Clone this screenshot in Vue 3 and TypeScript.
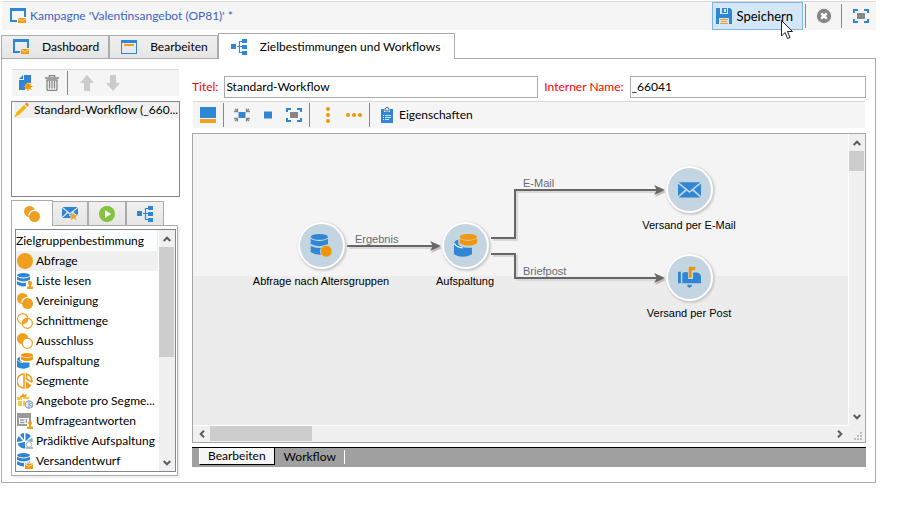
<script setup lang="ts">
import { ref } from 'vue'

interface MainTab { id: string; label: string; icon: string }
interface Activity { label: string; icon: string }
interface FlowNode { id: string; label: string; icon: string; x: number; y: number }
interface FlowLink { id: string; label: string; points: string; x: number; y: number; tipX: number; tipY: number }

const mainTabs: MainTab[] = [
  { id: 'dashboard', label: 'Dashboard', icon: 'campaign' },
  { id: 'edit', label: 'Bearbeiten', icon: 'window' },
  { id: 'targeting', label: 'Zielbestimmungen und Workflows', icon: 'tree' },
]
const activeTab = ref('targeting')

const paletteTabs = [
  { id: 'target', icon: 'union', title: 'Zielgruppenbestimmung' },
  { id: 'delivery', icon: 'mailstar', title: 'Versand' },
  { id: 'run', icon: 'play', title: 'Ausführung' },
  { id: 'flow', icon: 'tree', title: 'Ablauf' },
]
const activePalette = ref('target')

const activities: Activity[] = [
  { label: 'Abfrage', icon: 'query' },
  { label: 'Liste lesen', icon: 'readlist' },
  { label: 'Vereinigung', icon: 'union' },
  { label: 'Schnittmenge', icon: 'intersect' },
  { label: 'Ausschluss', icon: 'exclude' },
  { label: 'Aufspaltung', icon: 'split' },
  { label: 'Segmente', icon: 'segments' },
  { label: 'Angebote pro Segme...', icon: 'offers' },
  { label: 'Umfrageantworten', icon: 'survey' },
  { label: 'Prädiktive Aufspaltung', icon: 'predict' },
  { label: 'Versandentwurf', icon: 'draft' },
]
const selected = ref('Abfrage')

const title = ref('Standard-Workflow')
const internalName = ref('_66041')

const nodes: FlowNode[] = [
  { id: 'query', label: 'Abfrage nach Altersgruppen', icon: 'nodequery', x: 128, y: 112 },
  { id: 'split', label: 'Aufspaltung', icon: 'split', x: 272, y: 112 },
  { id: 'mail', label: 'Versand per E-Mail', icon: 'mail', x: 496, y: 56 },
  { id: 'post', label: 'Versand per Post', icon: 'mailbox', x: 496, y: 144 },
]
const links: FlowLink[] = [
  { id: 'result', label: 'Ergebnis', points: '154,112 240,112', x: 162, y: 109, tipX: 248, tipY: 112 },
  { id: 'email', label: 'E-Mail', points: '298,104 322,104 322,56 464,56', x: 330, y: 53, tipX: 472, tipY: 56 },
  { id: 'letter', label: 'Briefpost', points: '298,120 322,120 322,144 464,144', x: 330, y: 141, tipX: 472, tipY: 144 },
]
</script>

<template>
  <svg class="sprite" aria-hidden="true">
    <symbol id="i-campaign" viewBox="0 0 16 16">
      <path d="M0 0H16V9H14V3H2V12H7V14H0Z" fill="#2f86d4" />
      <rect x="8" y="10" width="8" height="5" fill="#f09a0d" />
      <path d="M8 10.5L12 13L16 10.5" fill="none" stroke="#fbd79c" />
    </symbol>
    <symbol id="i-window" viewBox="0 0 16 16">
      <path d="M0 1H16V15H0ZM1 4V14H15V4Z" fill="#2f86d4" fill-rule="evenodd" />
      <rect x="3" y="5" width="10" height="2" fill="#f0a020" />
    </symbol>
    <symbol id="i-tree" viewBox="0 0 16 16">
      <path d="M0 5H5V10H0ZM11 0H16V4H11ZM11 6H16V10H11ZM11 12H16V16H11Z" fill="#2f86d4" />
      <path d="M6 7.500H11M11 2.500H8.500V13.500H11" fill="none" stroke="#2f86d4" stroke-width="1.200" />
    </symbol>
    <symbol id="i-save" viewBox="0 0 16 16">
      <path d="M0 0H4V6H12V0H14L16 2V16H13V10H3V16H0ZM6 0H11V5H6ZM8 1V4H10V1Z" fill="#2f86d4" fill-rule="evenodd" />
      <path d="M2 6H14V10H2Z" fill="#2f86d4" />
      <path d="M4 11H12V12H4ZM5 13H11V14H5ZM4 15H12V16H4Z" fill="#f0a020" />
    </symbol>
    <symbol id="i-cancel" viewBox="0 0 16 16">
      <circle cx="8" cy="8" r="7.2" fill="#868686" />
      <path d="M5.3 5.3L10.7 10.7M10.7 5.3L5.3 10.7" stroke="#fff" stroke-width="2.4" />
    </symbol>
    <symbol id="i-frame" viewBox="0 0 16 16">
      <path d="M0 5V1H5V3H2V5ZM11 1H16V5H14V3H11ZM0 11H2V13H5V15H0ZM14 11H16V15H11V13H14Z" fill="#2f86d4" />
      <rect x="4" y="5" width="8" height="6" fill="#868686" />
    </symbol>
    <symbol id="i-new" viewBox="0 0 16 16">
      <path d="M6 0H13V8H9V10H7V15H1V5H6Z" fill="#2f86d4" />
      <path d="M1 4L5 0V4Z" fill="#2f86d4" />
      <path d="M10 7V16M5.500 11.500H14.500M6.800 8.300L13.200 14.700M13.200 8.300L6.800 14.700" stroke="#f09a0d" />
      <circle cx="10" cy="11.500" r="3" fill="#f09a0d" />
    </symbol>
    <symbol id="i-trash" viewBox="0 0 16 16">
      <path d="M5.500 2V.5H10.500V2M1 3H15" fill="none" stroke="#868686" stroke-width="1.600" />
      <path d="M3 5V14.500Q3 15.500 4 15.500H12Q13 15.500 13 14.500V5ZM5.500 6V13.500M8 6V13.500M10.500 6V13.500" fill="none" stroke="#868686" stroke-width="1.300" />
    </symbol>
    <symbol id="i-up" viewBox="0 0 16 16"><path d="M8 0L15 8H11V16H5V8H1Z" fill="#cbcbcb" /></symbol>
    <symbol id="i-down" viewBox="0 0 16 16"><path d="M8 16L15 8H11V0H5V8H1Z" fill="#cbcbcb" /></symbol>
    <symbol id="i-pencil" viewBox="0 0 16 16">
      <path d="M2.500 10.500L10 3L12.500 5.500L5 13L1 14.500Z" fill="#f2b705" />
      <path d="M10.800 2.200L12.500 .5Q14 .5 15 3L13.300 4.700Z" fill="#f08a1c" />
      <path d="M.500 15L1.200 13L2.500 14.300Z" fill="#e0a800" />
    </symbol>
    <symbol id="i-layout" viewBox="0 0 16 16">
      <rect y="0" width="16" height="11" fill="#2f86d4" /><rect y="12" width="16" height="4" fill="#f0a020" />
    </symbol>
    <symbol id="i-shrink" viewBox="0 0 16 16">
      <rect x="4.500" y="5" width="7" height="6" fill="#2f86d4" />
      <path d="M1 2L3 4M3.500 1.500V4.500H0M15 2L13 4M12.500 1.500V4.500H16M1 14L3 12M3.500 14.500V11.500H0M15 14L13 12M12.500 14.500V11.500H16" fill="none" stroke="#868686" stroke-width="1.300" />
    </symbol>
    <symbol id="i-square" viewBox="0 0 16 16"><rect x="4" y="4.500" width="8" height="7" fill="#2f86d4" /></symbol>
    <symbol id="i-vdots" viewBox="0 0 16 16">
      <circle cx="8" cy="2" r="2" fill="#f09507" /><circle cx="8" cy="8" r="2" fill="#f09507" /><circle cx="8" cy="14" r="2" fill="#f09507" />
    </symbol>
    <symbol id="i-hdots" viewBox="0 0 16 16">
      <circle cx="2" cy="8" r="2" fill="#f09507" /><circle cx="8" cy="8" r="2" fill="#f09507" /><circle cx="14" cy="8" r="2" fill="#f09507" />
    </symbol>
    <symbol id="i-clipboard" viewBox="0 0 16 16">
      <path d="M2 2H5V5H11V2H14V16H2Z" fill="#2f86d4" />
      <path d="M6 4V2.500A2 2 0 0 1 10 2.500V4Z" fill="#f5f5f5" stroke="#1f64a8" />
      <path d="M4 8.500H5M6 8.500H12M4 10.500H5M6 10.500H12M4 12.500H5M6 12.500H10" stroke="#cfe3f5" />
    </symbol>
    <symbol id="i-query" viewBox="0 0 16 16"><circle cx="8" cy="8" r="8" fill="#f0a020" /></symbol>
    <symbol id="i-union" viewBox="0 0 16 16">
      <circle cx="5.500" cy="5.500" r="5.500" fill="#f0a020" />
      <circle cx="10.500" cy="10.500" r="5.500" fill="#f0a020" />
      <path d="M4.700 9.500A6 6 0 0 1 11 4.400" fill="none" stroke="#fff" stroke-width="1.300" />
    </symbol>
    <symbol id="i-intersect" viewBox="0 0 16 16">
      <path d="M5 10.500A5.500 5.500 0 0 1 11 5A5.500 5.500 0 0 1 5 10.500Z" fill="#f0a020" />
      <circle cx="5.700" cy="5.700" r="5.100" fill="none" stroke="#f0a020" stroke-width="1.200" />
      <circle cx="10.300" cy="10.300" r="5.100" fill="none" stroke="#f0a020" stroke-width="1.200" />
    </symbol>
    <symbol id="i-exclude" viewBox="0 0 16 16">
      <circle cx="5.700" cy="5.700" r="5.700" fill="#f0a020" />
      <circle cx="10.300" cy="10.300" r="5.100" fill="#fff" stroke="#f0a020" stroke-width="1.200" />
    </symbol>
    <symbol id="i-db" viewBox="0 0 16 16">
      <ellipse cx="6.500" cy="2.200" rx="6.500" ry="2.200" fill="#2f86d4" />
      <path d="M0 3.800Q6.500 7.200 13 3.800V6.800Q6.500 10.200 0 6.800ZM0 8.300Q6.500 11.700 13 8.300V11.500Q6.500 15.500 0 11.500Z" fill="#2f86d4" />
    </symbol>
    <symbol id="i-readlist" viewBox="0 0 16 16">
      <use href="#i-db" width="16" height="16" />
      <path d="M9 9H16V16H9Z" fill="#fff" />
      <circle cx="13" cy="10" r="2.200" fill="#f0a020" />
      <path d="M10 16V13.500H12V11H14V13.500H16V16Z" fill="#f0a020" />
    </symbol>
    <symbol id="i-split" viewBox="0 0 16 16">
      <path d="M0 7Q0 4.500 3 4V7Q4 10 12.500 9.500V14Q6 17.500 0 14Z" fill="#2f86d4" />
      <path d="M.200 6.500Q1.500 9.300 6 9.700" fill="none" stroke="#fff" stroke-width=".8" />
      <ellipse cx="10" cy="2" rx="6" ry="2" fill="#f0960a" />
      <path d="M4 3.200Q10 6.300 16 3.200V6.500Q10 10 4 6.500Z" fill="#f0960a" />
    </symbol>
    <symbol id="i-segments" viewBox="0 0 16 16">
      <path d="M7 1A7 7 0 0 0 7 15ZM9.500 1A7 7 0 0 1 14.800 9L9.500 6Z" fill="#fff" stroke="#f0a020" stroke-width="1.600" />
      <path d="M8.700 8L14.500 12.500Q12.500 15.500 8.700 15.800Z" fill="#f0a020" />
    </symbol>
    <symbol id="i-offers" viewBox="0 0 16 16">
      <path d="M3 3L5 2L6 0L7.500 2L10 1L9 4H3Z" fill="#f0a020" />
      <path d="M0 4H5V7H0ZM6 4H12V6H6ZM1 8H5V13H1ZM6 8H8V13H6Z" fill="#f5c33c" />
      <circle cx="12" cy="11.500" r="3.800" fill="#e4edf7" stroke="#7f9fc4" />
      <path d="M12 7.500V15.500M12 11.500L15.500 9.500M12 11.500L15.500 13.500" stroke="#7f9fc4" />
    </symbol>
    <symbol id="i-survey" viewBox="0 0 16 16">
      <path d="M0 0H14V9H12V5H2V11H10V13H0Z" fill="#9a9a9a" />
      <path d="M3 7H7.500M3 9.500H7.500M9.500 6V10" stroke="#9a9a9a" stroke-width="1.300" />
      <circle cx="13" cy="10" r="2" fill="#f0a020" />
      <path d="M10 16V13.500H12V11H14V13.500H16V16Z" fill="#f0a020" />
    </symbol>
    <symbol id="i-predict" viewBox="0 0 16 16">
      <path d="M7 7V0A8 8 0 0 0 3 1.700ZM6 8L1.800 3A8 8 0 0 0 0 9ZM7 9L.500 10.500A8 8 0 0 0 8 15.500V9ZM8.500 7V0Q12 .3 14 3L9 8Z" fill="#2f86d4" />
      <path d="M10 8L15 4.500Q16.200 7 15.500 9Z" fill="#7db2e2" />
      <circle cx="12" cy="11.500" r="2.800" fill="#fff" stroke="#a5b0bb" /><path d="M8.500 15H16" stroke="#9aa7b5" stroke-width="1.500" />
    </symbol>
    <symbol id="i-draft" viewBox="0 0 16 16">
      <use href="#i-db" width="16" height="16" />
      <rect x="7" y="9.500" width="9" height="6.500" fill="#fff" />
      <rect x="8" y="10.500" width="8" height="5.500" fill="#f09a0d" />
      <path d="M8 11L12 13.500L16 11" fill="none" stroke="#fbe0b0" />
    </symbol>
    <symbol id="i-mail" viewBox="0 0 16 16">
      <path d="M.500 3H15.500L8 9ZM0 4L5 8L0 12.500ZM16 4L11 8L16 12.500ZM.500 13.500L6 8.800L8 10.500L10 8.800L15.500 13.500Z" fill="#2f86d4" />
    </symbol>
    <symbol id="i-mailstar" viewBox="0 0 16 16">
      <path d="M.500 1H15.500L8 7ZM0 2L5 6L0 11ZM16 2L11 6L16 10ZM.500 12L6 7L8 8.500L10 7L13 12Z" fill="#2f86d4" />
      <path d="M11.500 5.500L13 9H16L13.800 11.200L14.800 15L11.500 12.700L8.200 15L9.200 11.200L7 9H10Z" fill="#f0a020" stroke="#eee" stroke-width=".6" />
    </symbol>
    <symbol id="i-play" viewBox="0 0 16 16">
      <circle cx="8" cy="8" r="8" fill="#84c341" /><path d="M6 4L12 8L6 12Z" fill="#fff" />
    </symbol>
    <symbol id="i-nodequery" viewBox="0 0 16 16">
      <ellipse cx="6.500" cy="2" rx="6" ry="2" fill="#2f86d4" />
      <path d="M.500 3.500Q6.500 6.500 12.500 3.500V7Q6.500 10 .5 7ZM.500 8.300Q6.500 11.300 12.500 8.300V12.500Q6.500 16.500 .5 12.500Z" fill="#2f86d4" />
      <circle cx="11.300" cy="12" r="4.100" fill="#f09507" stroke="#c3d5e2" stroke-width=".6" />
    </symbol>
    <symbol id="i-mailbox" viewBox="0 0 16 16">
      <path d="M0 4H2V12H0ZM3 5Q5 3.500 7 4.500V9H10.500V4.500H13Q16 5 16 8V12H3Z" fill="#2f86d4" />
      <path d="M7.500 8V.5H12V3H9.500V8Z" fill="#f09507" />
      <path d="M6.500 13H9.500V14.500H8.800L8 15.500L7.200 14.500H6.500Z" fill="#2f86d4" />
    </symbol>
    <symbol id="i-chevron" viewBox="0 0 8 8"><path d="M.7 6L4 2.700L7.300 6" fill="none" stroke="#5c5c5c" stroke-width="2" /></symbol>
  </svg>

  <div class="app">
    <header class="titlebar">
      <svg class="icon"><use href="#i-campaign" /></svg>
      <h1>Kampagne 'Valentinsangebot (OP81)' *</h1>
      <div class="actions">
        <button class="save" type="button">
          <svg class="icon"><use href="#i-save" /></svg>Speichern
          <svg class="pointer" viewBox="0 0 12 20" aria-hidden="true">
            <path d="M.5 .5V16L4 12.500L6.500 18.500L9 17.500L6.500 11.500H11.500Z" fill="#fff" stroke="#222" />
          </svg>
        </button>
        <span class="sep"></span>
        <button class="tool wide" type="button" aria-label="Abbrechen"><svg class="icon"><use href="#i-cancel" /></svg></button>
        <span class="sep"></span>
        <button class="tool wide" type="button" aria-label="Maximieren"><svg class="icon"><use href="#i-frame" /></svg></button>
      </div>
    </header>

    <nav class="tabs">
      <button v-for="tab in mainTabs" :key="tab.id" type="button" class="tab" :class="{ active: tab.id === activeTab }" @click="activeTab = tab.id">
        <svg class="icon"><use :href="'#i-' + tab.icon" /></svg>{{ tab.label }}
      </button>
    </nav>

    <main class="panel">
      <aside class="side">
        <div class="toolbar">
          <button class="tool" type="button" aria-label="Neu"><svg class="icon"><use href="#i-new" /></svg></button>
          <button class="tool" type="button" aria-label="Löschen"><svg class="icon"><use href="#i-trash" /></svg></button>
          <span class="sep"></span>
          <button class="tool" type="button" aria-label="Nach oben"><svg class="icon"><use href="#i-up" /></svg></button>
          <button class="tool" type="button" aria-label="Nach unten"><svg class="icon"><use href="#i-down" /></svg></button>
        </div>
        <ul class="workflows">
          <li>
            <button class="item chosen" type="button"><svg class="icon"><use href="#i-pencil" /></svg><span>Standard-Workflow (_660...</span></button>
          </li>
        </ul>
        <div class="ptabs">
          <button v-for="tab in paletteTabs" :key="tab.id" type="button" class="ptab" :class="{ active: tab.id === activePalette }" :aria-label="tab.title" @click="activePalette = tab.id">
            <svg class="icon"><use :href="'#i-' + tab.icon" /></svg>
          </button>
        </div>
        <div class="palette">
          <div class="box">
            <div class="entries">
              <h2>Zielgruppenbestimmung</h2>
              <ul>
                <li v-for="a in activities" :key="a.label">
                  <button class="item" :class="{ chosen: a.label === selected }" type="button" @click="selected = a.label">
                    <svg class="icon"><use :href="'#i-' + a.icon" /></svg><span>{{ a.label }}</span>
                  </button>
                </li>
              </ul>
            </div>
            <div class="vbar">
              <button type="button" aria-label="Hoch"><svg class="chev"><use href="#i-chevron" /></svg></button>
              <div class="track"><div class="thumb long"></div></div>
              <button type="button" aria-label="Runter"><svg class="chev down"><use href="#i-chevron" /></svg></button>
            </div>
          </div>
        </div>
      </aside>

      <section class="editor">
        <form class="fields" @submit.prevent>
          <label for="title">Titel:</label>
          <input id="title" v-model="title" class="grow4" type="text" />
          <label for="name">Interner Name:</label>
          <input id="name" v-model="internalName" class="grow3" type="text" />
        </form>
        <div class="toolbar main">
          <button class="tool" type="button" aria-label="Ansicht"><svg class="icon"><use href="#i-layout" /></svg></button>
          <span class="sep"></span>
          <button class="tool" type="button" aria-label="Einpassen"><svg class="icon"><use href="#i-shrink" /></svg></button>
          <button class="tool" type="button" aria-label="Originalgröße"><svg class="icon"><use href="#i-square" /></svg></button>
          <button class="tool" type="button" aria-label="Vollbild"><svg class="icon"><use href="#i-frame" /></svg></button>
          <span class="sep"></span>
          <button class="tool" type="button" aria-label="Vertikal ausrichten"><svg class="icon"><use href="#i-vdots" /></svg></button>
          <button class="tool" type="button" aria-label="Horizontal ausrichten"><svg class="icon"><use href="#i-hdots" /></svg></button>
          <span class="sep"></span>
          <button class="tool text" type="button"><svg class="icon"><use href="#i-clipboard" /></svg>Eigenschaften</button>
        </div>

        <div class="viewport">
          <div class="surface">
            <svg class="links">
              <g v-for="l in links" :key="l.id">
                <polyline class="shade" :points="l.points" />
                <path class="shadetip" :transform="`translate(${l.tipX + 1} ${l.tipY + 2})`" d="M0 0L-11 -5L-8 0L-11 5Z" />
                <polyline class="line" :points="l.points" />
                <path class="tip" :transform="`translate(${l.tipX} ${l.tipY})`" d="M0 0L-11 -5L-8 0L-11 5Z" />
                <text :x="l.x" :y="l.y">{{ l.label }}</text>
              </g>
            </svg>
            <button v-for="n in nodes" :key="n.id" type="button" class="node" :style="{ left: n.x + 'px', top: n.y + 'px' }">
              <span class="disc"><svg class="glyph"><use :href="'#i-' + n.icon" /></svg></span>
              <span class="caption">{{ n.label }}</span>
            </button>
          </div>
          <div class="vbar">
            <button type="button" aria-label="Hoch"><svg class="chev"><use href="#i-chevron" /></svg></button>
            <div class="track"><div class="thumb"></div></div>
            <button type="button" aria-label="Runter"><svg class="chev down"><use href="#i-chevron" /></svg></button>
          </div>
          <div class="hbar">
            <button type="button" aria-label="Links"><svg class="chev left"><use href="#i-chevron" /></svg></button>
            <div class="track"><div class="thumb"></div></div>
            <button type="button" aria-label="Rechts"><svg class="chev right"><use href="#i-chevron" /></svg></button>
          </div>
          <svg class="grip" viewBox="0 0 8 8"><path d="M6 0H8V2H6ZM3 3H5V5H3ZM6 3H8V5H6ZM0 6H2V8H0ZM3 6H5V8H3ZM6 6H8V8H6Z" fill="#bdbdbd" /></svg>
        </div>

        <div class="sheets">
          <button class="sheet current" type="button">Bearbeiten</button>
          <button class="sheet" type="button">Workflow</button>
        </div>
      </section>
    </main>
  </div>
</template>

<style>
body { background: #fff; }
</style>

<style scoped>
.sprite { display: block; width: 0; height: 0; }
.app { padding: 1px 28px 0 1px; font: 12px/16px Lato, "Open Sans", sans-serif; color: #000; }
.app *, .app { box-sizing: border-box; }
button { margin: 0; padding: 0; border: 0; background: none; font: inherit; color: inherit; display: flex; align-items: center; justify-content: center; white-space: nowrap; }
ul { list-style: none; margin: 0; padding: 0; }
h1, h2 { margin: 0; font-size: 12px; font-weight: 400; }
.icon { width: 16px; height: 16px; flex: none; display: block; }
.sep { width: 1px; height: 24px; background: #888; flex: none; }

.titlebar { display: flex; align-items: center; gap: 4px; height: 29px; margin-left: 1px; padding-left: 8px; background: #f5f5f5; border-top: 1px solid #d9d9d9; }
.titlebar h1 { color: #3c62c4; white-space: nowrap; }
.actions { display: flex; align-items: center; margin-left: auto; align-self: stretch; }
.save { position: relative; height: 28px; gap: 5px; padding: 0 9px 0 3px; margin-right: 2px; border: 1px solid #7eb4ea; background: #d5e6f6; font-size: 13px; }
.pointer { position: absolute; right: 9px; top: 17px; width: 12px; height: 20px; z-index: 2; }
.tool { width: 26px; height: 26px; }
.tool.wide { width: 35px; padding: 0; }
.actions .wide:last-child { width: 34px; padding: 0 0 0 4px; }

.tabs { display: flex; align-items: flex-end; height: 28px; position: relative; }
.tab { gap: 13px; height: 23px; padding: 0 9px 0 11px; border: 1px solid #ababab; border-bottom: 0; background: linear-gradient(#f0f0f0, #e5e5e5); }
.tab.active { height: 26px; padding: 0 14px 0 12px; background: #fff; margin-bottom: -1px; }

.panel { display: flex; gap: 12px; padding: 10px 9px 6px; border: 1px solid #ababab; }
.side { width: 169px; flex: none; display: flex; flex-direction: column; }
.toolbar { display: flex; align-items: center; height: 27px; margin: 0 1px; background: #f5f5f5; border-top: 1px solid #d9d9d9; }
.side .toolbar { padding-left: 1px; }
.side .sep { margin: 0 6px 0 2px; }
.workflows { height: 96px; margin-top: 5px; padding-left: 2px; border: 1px solid #828790; }
.item { width: 100%; justify-content: flex-start; height: 20px; gap: 4px; text-align: left; }
.workflows .item { height: 16px; }
.item.chosen { background: #f0f0f0; }

.ptabs { display: flex; align-items: flex-end; height: 28px; position: relative; }
.ptab { width: 38px; height: 24px; border: 1px solid #ababab; border-bottom: 0; background: linear-gradient(#f0f0f0, #e5e5e5); }
.ptab:nth-child(2) { width: 35px; border-left: 0; }
.ptab.active { width: 42px; height: 26px; background: #fff; margin-bottom: -1px; }
.palette { width: 167px; padding: 3px 1px 3px 3px; border: 1px solid #ababab; box-shadow: 2px 2px 0 #f0f0f0; }
.box { display: flex; border: 1px solid #828790; height: 243px; }
.entries { flex: 1; min-width: 0; padding-right: 1px; }
h2 { height: 21px; line-height: 21px; background: #fbfdfe; border-right: 1px solid #e2eef5; white-space: nowrap; }
.entries .item { padding-left: 1px; gap: 3px; }

.vbar { width: 16px; background: #f0f0f0; display: flex; flex-direction: column; }
.vbar button { height: 17px; width: 100%; }
.track { flex: 1; min-width: 0; min-height: 0; }
.thumb { background: #cdcdcd; width: 15px; height: 20px; }
.thumb.long { height: 110px; }
.chev { width: 8px; height: 8px; display: block; }
.down { transform: rotate(180deg); }
.left { transform: rotate(-90deg); }
.right { transform: rotate(90deg); }

.editor { flex: 1; min-width: 0; padding-top: 7px; display: flex; flex-direction: column; }
.fields { display: flex; align-items: center; gap: 6px; }
.fields label { color: #f00; white-space: nowrap; }
.fields input { height: 22px; min-width: 0; padding: 0 1px 2px; border: 1px solid #ababab; background: #fff; font: inherit; color: #000; border-radius: 0; outline: 0; }
.grow4 { flex: 4; }
.grow3 { flex: 3; }
.main { margin-top: 3px; padding-left: 2px; }
.main .sep { margin: 0 5px 0 2px; }
.tool.text { width: auto; padding: 0 4px; gap: 4px; }

.viewport { display: grid; grid-template-columns: minmax(0, 1fr) 17px; grid-template-rows: auto 17px; margin-top: 5px; border: 1px solid #a5a5ab; background: #f0f0f0; }
.surface { position: relative; height: 291px; overflow: hidden; background: linear-gradient(#f4f4f4 142px, #ececec 142px); }
.viewport .vbar { width: 17px; border-left: 1px solid #fff; }
.hbar { display: flex; border-top: 1px solid #fff; }
.hbar button { width: 17px; height: 15px; }
.hbar .thumb { width: 102px; height: 15px; }
.grip { width: 8px; height: 8px; align-self: end; justify-self: end; margin: 0 3px 2px 0; }

.links { position: absolute; left: 0; top: 0; width: 100%; height: 100%; }
.line, .shade { fill: none; stroke: #666; stroke-width: 2; }
.shade { stroke: #d8d8d8; transform: translate(2px, 2px); }
.tip { fill: #666; }
.shadetip { fill: #bdbdbd; }
.links text { font: 11px "Liberation Sans", Arial, sans-serif; fill: #666b73; }
.node { position: absolute; flex-direction: column; gap: 6px; width: 160px; margin: -24px 0 0 -80px; font: 11px/13px "Liberation Sans", Arial, sans-serif; }
.disc { display: flex; align-items: center; justify-content: center; width: 47px; height: 47px; border: 2px solid #fff; border-radius: 50%; background: #c3d5e1; box-shadow: 1px 1px 2px 1px #ccc; }
.glyph { width: 23px; height: 23px; display: block; }

.sheets { display: flex; height: 20px; margin-top: 4px; padding-left: 7px; background: #a0a0a0; border-top: 1px solid #000; }
.sheet { height: 17px; padding: 0 9px; }
.sheet:last-child { border-right: 1px solid #fff; height: 14px; margin-top: 2px; padding: 0 8px 0 9px; }
.sheet.current { background: #f5f5f5; border-right: 1px solid #000; border-bottom: 1px solid #000; border-left: 1px solid #fff; padding: 0 8px; }
</style>
